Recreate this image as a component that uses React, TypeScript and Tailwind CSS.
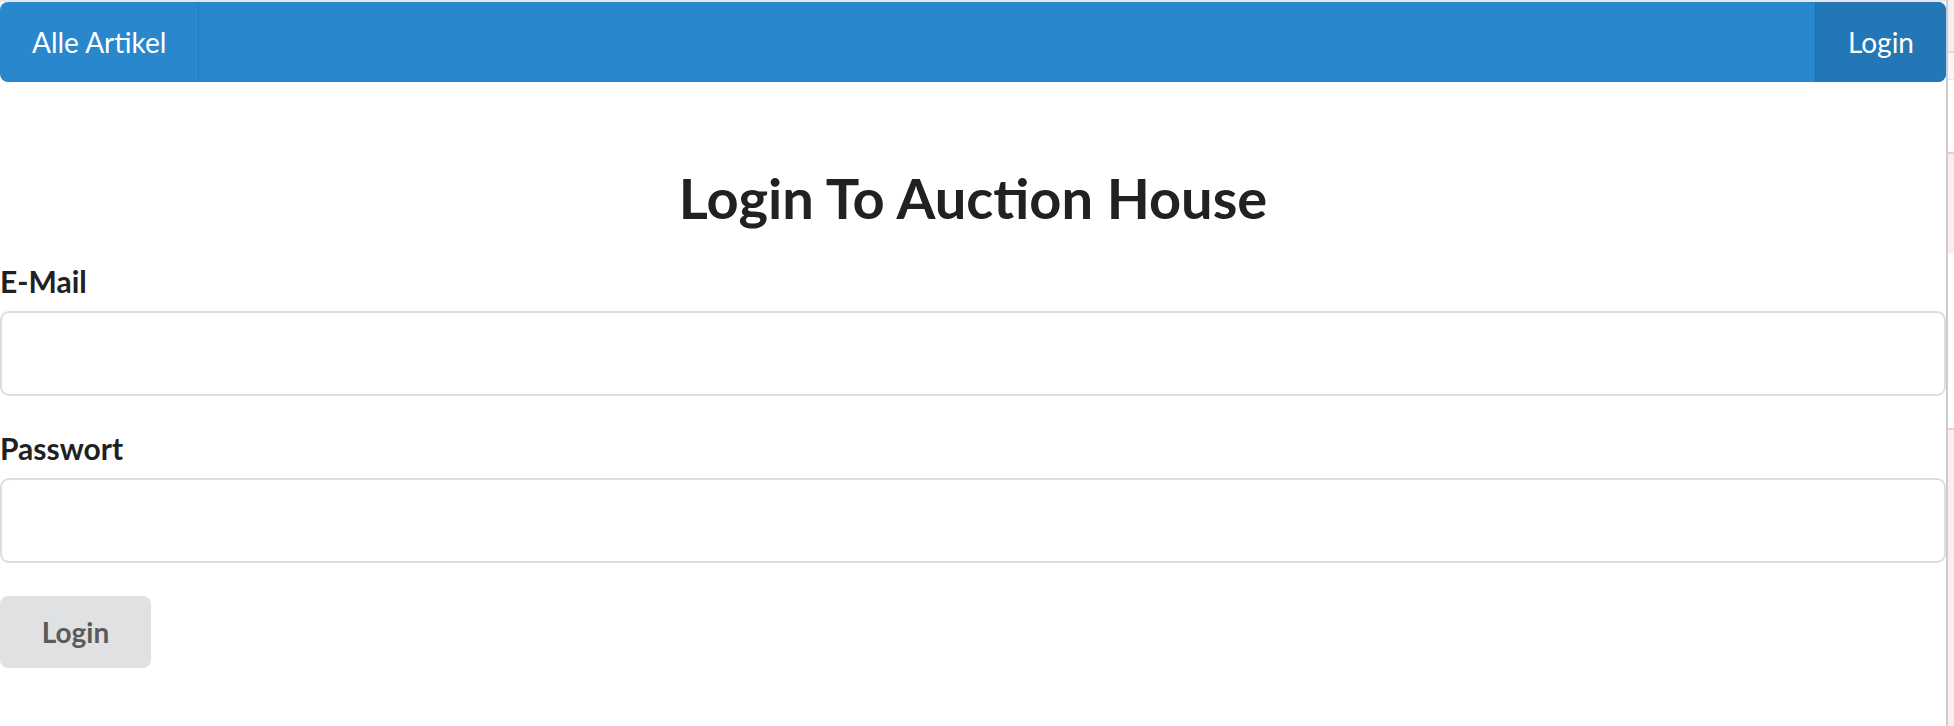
export default function App() {
  return (
    <div className="flex h-[726px] w-[1954px] overflow-hidden bg-white font-['Lato',sans-serif] text-[#212121]">
      <div className="flex w-[1946px] flex-col">
        <div className="h-[2px] shrink-0 bg-[#e6e6e8]" />
        <nav className="flex h-[80px] shrink-0 rounded-[8px] bg-[#2987cd] text-[28px] text-white">
          <a className="flex items-center border-r border-[#2579bb] px-[32px]">Alle Artikel</a>
          <a className="ml-auto flex items-center rounded-r-[8px] border-l border-[#236fab] bg-[#2477b7] px-[32px]">
            Login
          </a>
        </nav>

        <h1 className="mt-[82px] text-center text-[56px] font-bold leading-[1.2]">Login To Auction House</h1>

        <form className="mt-[32px] flex flex-col">
          <label className="text-[30px] font-bold leading-[1.2]">E-Mail</label>
          <input
            type="email"
            className="mt-[12px] h-[85px] w-full rounded-[9px] border-2 border-[#dedede] bg-white px-4 text-[28px] outline-none"
          />
          <label className="mt-[34px] text-[30px] font-bold leading-[1.2]">Passwort</label>
          <input
            type="password"
            className="mt-[12px] h-[85px] w-full rounded-[9px] border-2 border-[#dedede] bg-white px-4 text-[28px] outline-none"
          />
          <button
            type="button"
            className="mt-[33px] h-[72px] w-[151px] rounded-[8px] bg-[#e0e1e2] text-[28px] font-bold text-[#5a5a5a]"
          >
            Login
          </button>
        </form>
      </div>

      {/* edge of the neighbouring window */}
      <div className="w-[2px] bg-[#cbccd1]" />
      <div className="flex w-[6px] flex-col">
        <div className="h-[53px] border-b-2 border-[#dcdde0] bg-[#f0f0f2]" />
        <div className="h-[27px] border-b border-[#e6e6e8] bg-[#f7f7f8]" />
        <div className="h-[72px]" />
        <div className="h-[101px] border-t-2 border-[#f8c9c9] bg-[#fdeeee]" />
        <div className="h-[175px]" />
        <div className="flex-1 border-t-2 border-[#f8c9c9] bg-[#fdeeee]" />
      </div>
    </div>
  );
}
